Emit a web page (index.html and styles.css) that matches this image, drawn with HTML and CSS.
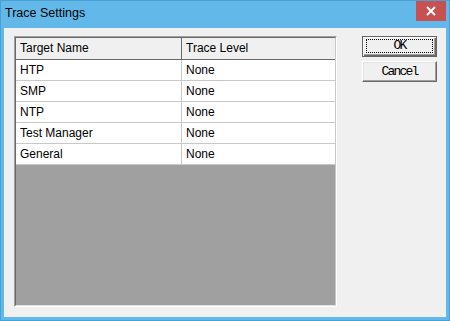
FILE: index.html
```html
<!DOCTYPE html>
<html>
<head>
<meta charset="utf-8">
<link rel="stylesheet" href="styles.css">
</head>
<body>
<div class="window">
  <div class="titlebar">
    <span class="title">Trace Settings</span>
    <div class="close">
      <svg width="10" height="10" viewBox="0 0 10 10"><path d="M1 1 L9 9 M9 1 L1 9" stroke="#fff" stroke-width="2" fill="none"/></svg>
    </div>
  </div>
  <div class="client">
    <div class="list">
      <div class="list-inner">
        <div class="row head">
          <div class="cell c1">Target Name</div>
          <div class="cell c2">Trace Level</div>
        </div>
        <div class="row"><div class="cell c1">HTP</div><div class="cell c2">None</div></div>
        <div class="row"><div class="cell c1">SMP</div><div class="cell c2">None</div></div>
        <div class="row"><div class="cell c1">NTP</div><div class="cell c2">None</div></div>
        <div class="row"><div class="cell c1">Test Manager</div><div class="cell c2">None</div></div>
        <div class="row"><div class="cell c1">General</div><div class="cell c2">None</div></div>
      </div>
    </div>
    <div class="buttons">
      <div class="btn default"><div class="focus">OK</div></div>
      <div class="btn"><div class="label">Cancel</div></div>
    </div>
  </div>
</div>
</body>
</html>
```
FILE: styles.css
```css
html, body {
  margin: 0;
  padding: 0;
  background: #ffffff;
}
.window {
  width: 450px;
  height: 321px;
  box-sizing: border-box;
  border: 1px solid #4a9fd6;
  background: #62b9e9;
  padding: 0 3px 3px 3px;
  display: flex;
  flex-direction: column;
  font-family: "Liberation Sans", Arial, sans-serif;
  font-size: 12px;
  color: #000;
}
.titlebar {
  height: 27px;
  display: flex;
  align-items: flex-start;
  justify-content: space-between;
}
.title {
  font-size: 12.5px;
  line-height: 16px;
  margin-top: 4px;
  margin-left: 1px;
}
.close {
  width: 30px;
  height: 20px;
  background: #c75050;
  display: flex;
  align-items: center;
  justify-content: center;
}
.close svg {
  display: block;
}
.client {
  flex: 1;
  background: #f0f0f0;
  display: flex;
  padding: 8px 9px 10px 10px;
}
.list {
  width: 323px;
  box-sizing: border-box;
  border: 1px solid;
  border-color: #a0a0a0 #ffffff #ffffff #a0a0a0;
}
.list-inner {
  height: 100%;
  box-sizing: border-box;
  border: 1px solid;
  border-color: #696969 #c8c8c8 #e3e3e3 #696969;
  background: #a0a0a0;
  display: flex;
  flex-direction: column;
}
.row {
  display: flex;
  height: 21px;
  box-sizing: border-box;
  background: #ffffff;
  border-bottom: 1px solid #c8c8c8;
}
.row.head {
  height: 22px;
  background: #f0f0f0;
  border-bottom: 1px solid #696969;
}
.cell {
  line-height: 20px;
  padding-left: 4px;
  white-space: nowrap;
  box-sizing: border-box;
}
.c1 {
  width: 166px;
  border-right: 1px solid #c8c8c8;
}
.head .c1 {
  border-right-color: #696969;
}
.head .cell {
  line-height: 21px;
}
.c2 {
  flex: 1;
}
.buttons {
  margin-left: 25px;
  width: 75px;
  display: flex;
  flex-direction: column;
  gap: 4px;
}
.btn {
  height: 21px;
  box-sizing: border-box;
  background: #f0f0f0;
  border: 1px solid;
  border-color: #ffffff #696969 #696969 #ffffff;
  box-shadow: inset -1px -1px #a0a0a0, inset 1px 1px #e3e3e3;
  display: flex;
  font-family: "Liberation Mono", "Courier New", monospace;
  font-size: 13px;
  letter-spacing: -1.8px;
}
.btn.default {
  border: 1px solid #646464;
  box-shadow: inset 1px 1px #ffffff, inset -1px -1px #696969, inset -2px -2px #a0a0a0;
  padding: 2px 3px 3px 3px;
}
.focus {
  flex: 1;
  border: 1px dotted #000;
  display: flex;
  align-items: center;
  justify-content: center;
  line-height: 12px;
}
.label {
  flex: 1;
  display: flex;
  align-items: center;
  justify-content: center;
  line-height: 12px;
}
```
